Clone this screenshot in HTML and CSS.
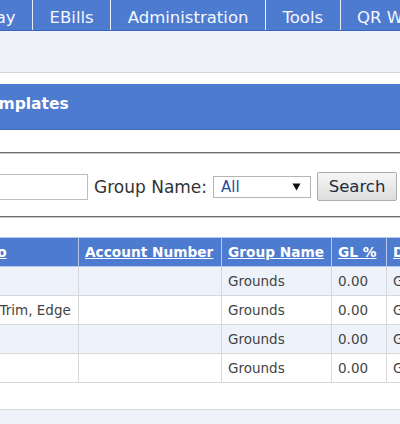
FILE: index.html
```html
<!DOCTYPE html>
<html lang="en">
<head>
<meta charset="utf-8">
<title>GL Templates</title>
<link rel="stylesheet" href="styles.css">
</head>
<body>
<div class="page">
  <nav class="topnav">
    <a class="nav-item nav-first">Pay</a>
    <a class="nav-item">EBills</a>
    <a class="nav-item">Administration</a>
    <a class="nav-item">Tools</a>
    <a class="nav-item">QR Workflow</a>
  </nav>
  <div class="subbar"></div>
  <div class="titlebar"><h1 class="title">Templates</h1></div>
  <div class="search">
    <div class="search-row">
      <input class="text-input" type="text">
      <span class="label">Group Name:</span>
      <div class="select"><span class="select-value">All</span><svg class="select-arrow" width="9" height="9" viewBox="0 0 9 9"><path d="M0.5 1.5 H8.5 L4.5 8.5 Z" fill="#111"/></svg></div>
      <button class="btn" type="button">Search</button>
    </div>
  </div>
  <table class="grid">
    <colgroup>
      <col class="c1"><col class="c2"><col class="c3"><col class="c4"><col class="c5">
    </colgroup>
    <thead>
      <tr>
        <th><a>Memo</a></th>
        <th><a>Account Number</a></th>
        <th><a>Group Name</a></th>
        <th><a>GL %</a></th>
        <th><a>Description</a></th>
      </tr>
    </thead>
    <tbody>
      <tr class="alt"><td>Mow</td><td></td><td>Grounds</td><td>0.00</td><td>General</td></tr>
      <tr><td>Mow, Trim, Edge</td><td></td><td>Grounds</td><td>0.00</td><td>General</td></tr>
      <tr class="alt"><td>Sod</td><td></td><td>Grounds</td><td>0.00</td><td>General</td></tr>
      <tr><td>Rake</td><td></td><td>Grounds</td><td>0.00</td><td>General</td></tr>
    </tbody>
  </table>
  <div class="footer"></div>
</div>
</body>
</html>
```
FILE: styles.css
```css
html, body {
  margin: 0;
  padding: 0;
  overflow: hidden;
  background: #ffffff;
}
body {
  font-family: "DejaVu Sans", Verdana, sans-serif;
  color: #333333;
}
.page {
  width: 400px;
  height: 424px;
  overflow: hidden;
}
.topnav {
  display: flex;
  white-space: nowrap;
  background: #4d7bd0;
  border-bottom: 1px solid #3c66b8;
  height: 30px;
}
.nav-item {
  flex: none;
  display: block;
  padding: 6px 16.5px 0;
  line-height: 24px;
  font-size: 16.5px;
  color: #f6f8ff;
  border-right: 1px solid #e8eefa;
}
.nav-first {
  margin-left: -30px;
}
.subbar {
  height: 41px;
  background: #eff2f9;
  border-bottom: 1px solid #d6d6d6;
}
.titlebar {
  margin-top: 11px;
  height: 45px;
  background: #4d7bd0;
  border-bottom: 1px solid #3c66b8;
}
.title {
  margin: 0 0 0 -20.5px;
  font-size: 15.5px;
  font-weight: bold;
  line-height: 40px;
  color: #ffffff;
  white-space: nowrap;
}
.search {
  margin-top: 22px;
  border-top: 2px groove #c4c4c4;
  border-bottom: 2px groove #c4c4c4;
  padding: 18px 0 15px;
}
.search-row {
  display: flex;
  align-items: center;
  height: 29px;
  white-space: nowrap;
}
.text-input {
  flex: none;
  box-sizing: border-box;
  width: 160px;
  height: 26px;
  margin: 0 0 0 -72px;
  border: 1px solid #bdbdbd;
  padding: 0;
  background: #fff;
}
.label {
  margin-left: 6px;
  font-size: 17px;
  color: #333;
}
.select {
  flex: none;
  box-sizing: border-box;
  display: flex;
  align-items: center;
  justify-content: space-between;
  width: 98px;
  height: 22px;
  margin-left: 6px;
  padding: 0 9px 0 7px;
  border: 1px solid #b5b5b5;
  background: #fff;
}
.select-value {
  font-size: 15px;
  color: #2a4c9c;
}
.select-arrow {
  display: block;
}
.btn {
  flex: none;
  box-sizing: border-box;
  width: 80px;
  height: 29px;
  margin-left: 6px;
  padding: 0;
  border: 1px solid #adadad;
  border-radius: 2px;
  background: linear-gradient(#f6f6f6, #dddddd);
  font-family: "DejaVu Sans", Verdana, sans-serif;
  font-size: 16.5px;
  color: #1e2a40;
}
.grid {
  margin-top: 19px;
  margin-left: -47px;
  border-collapse: collapse;
  table-layout: fixed;
  width: 583px;
  font-size: 13.5px;
  color: #444444;
}
.c1 { width: 125px; }
.c2 { width: 143px; }
.c3 { width: 110px; }
.c4 { width: 55px; }
.c5 { width: 150px; }
.grid th {
  height: 28px;
  padding: 0 6px;
  text-align: left;
  font-size: 13.7px;
  font-weight: bold;
  background: #4d7bd0;
  border: 1px solid #b7c8ec;
  white-space: nowrap;
  overflow: hidden;
}
.grid th a {
  color: #ffffff;
  text-decoration: underline;
}
.grid td {
  height: 28px;
  padding: 0 6px;
  border: 1px solid #d8d8d8;
  white-space: nowrap;
  overflow: hidden;
}
.grid tr.alt td {
  background: #eef2fa;
}
.footer {
  margin-top: 26px;
  border-top: 1px solid #d8d8d8;
  background: #eff2f9;
  height: 40px;
}
```
